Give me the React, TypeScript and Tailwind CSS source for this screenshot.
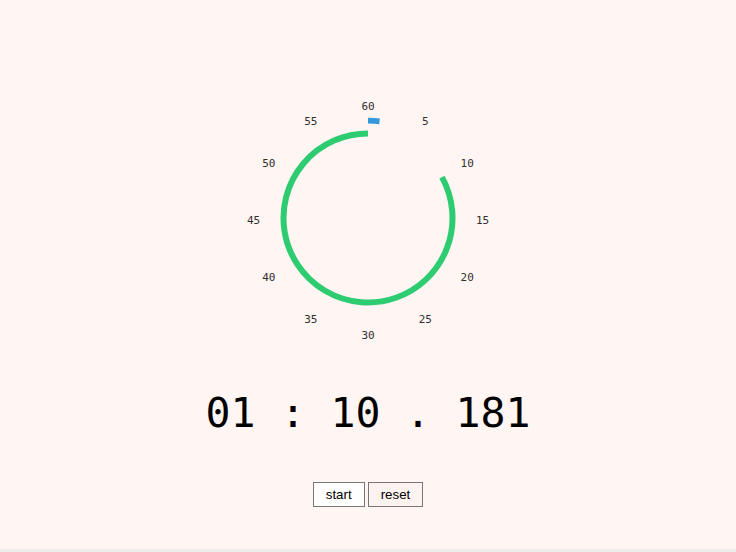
import React from 'react';

const CX = 130;
const CY = 130;

const polar = (r: number, deg: number, cy = CY) => {
  const a = (deg * Math.PI) / 180;
  return { x: CX + r * Math.sin(a), y: cy - r * Math.cos(a) };
};

const Dial: React.FC<{ seconds: number }> = ({ seconds }) => {
  const labels = Array.from({ length: 12 }, (_, i) => (i + 1) * 5);
  const startDeg = (seconds / 60) * 360;
  const s = polar(84.5, startDeg);
  const green = `M ${s.x} ${s.y} A 84.5 84.5 0 1 1 ${CX} ${CY - 84.5}`;
  const b = polar(97.3, 6.8);
  const blue = `M ${CX} ${CY - 97.3} A 97.3 97.3 0 0 1 ${b.x} ${b.y}`;

  return (
    <svg width="260" height="260" viewBox="0 0 260 260" className="block">
      {labels.map((n) => {
        const p = polar(114.5, (n / 60) * 360, CY + 2.5);
        return (
          <text
            key={n}
            x={p.x}
            y={p.y}
            textAnchor="middle"
            dominantBaseline="central"
            fontFamily="'DejaVu Sans Mono', monospace"
            fontSize="11"
            fill="#2f2f2f"
          >
            {n}
          </text>
        );
      })}
      <path d={green} fill="none" stroke="#2ecc71" strokeWidth="6" />
      <path d={blue} fill="none" stroke="#3498db" strokeWidth="5.7" />
    </svg>
  );
};

const App: React.FC = () => {
  return (
    <div className="h-[552px] bg-[#eeeeee]">
      <div className="h-[549px] bg-[#fff5f3] flex flex-col items-center pt-[88px]">
        <Dial seconds={10.181} />

        <div className="mt-[40px] text-[41.5px] leading-[50px] text-black font-['DejaVu_Sans_Mono',monospace] whitespace-pre">
          01 : 10 . 181
        </div>

        <div className="mt-[44px] flex gap-[3px] font-['Liberation_Sans',Arial,sans-serif] text-[13.33px]">
          <button className="h-[25px] px-[12px] border border-[#767676] bg-white text-black">start</button>
          <button className="h-[25px] px-[12px] border border-[#767676] bg-[#fcf3f1] text-black">reset</button>
        </div>
      </div>
    </div>
  );
};

export default App;
